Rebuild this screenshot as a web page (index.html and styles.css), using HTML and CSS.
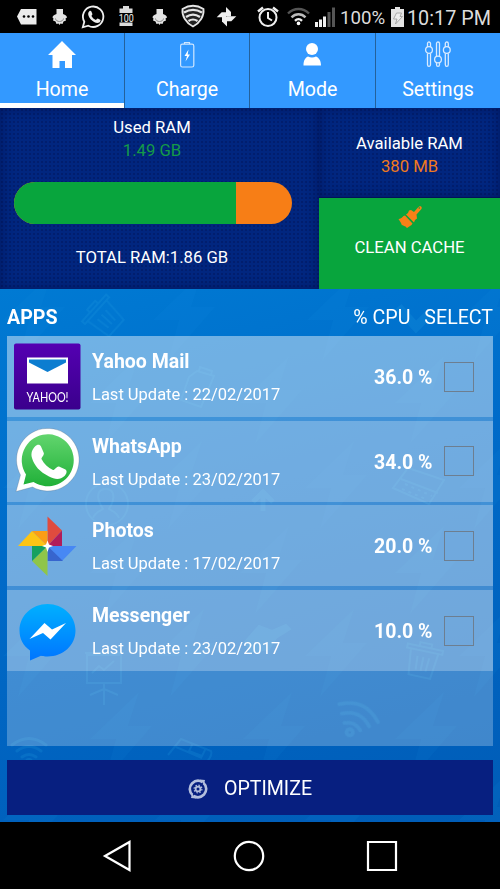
FILE: index.html
```
<!DOCTYPE html>
<html lang="en">
<head>
    <meta charset="UTF-8">
    <meta name="viewport" content="width=device-width, initial-scale=1.0">
    <title>Battery Optimizer</title>
    <link rel="stylesheet" href="styles.css">
</head>
<body>
    <div class="status-bar">
        <svg class="status-icons" width="336" height="33" viewBox="0 0 336 33">
            <!-- message -->
            <path d="M17 16.5L21 9h15.500v15.500H21z" fill="#ececec"/>
            <g fill="#000"><circle cx="24" cy="16.500" r="1.300"/><circle cx="28.500" cy="16.500" r="1.300"/><circle cx="33" cy="16.500" r="1.300"/></g>
            <!-- bulbs -->
            <g id="bulb">
                <path d="M56.500 9h6.500v5c2.500.8 4 2 4 3.500l-1.500 1 .5 2-2.500 1-1 2.500-2-.5-1 1.500-1-1.500-2 .5-1-2.500-2.500-1 .5-2-1-1c0-1.500 1.500-2.700 4-3.500z" fill="#e4e4e4"/>
                <path d="M55.500 18.500c.5 4 7.500 4 8 0" fill="none" stroke="#888" stroke-width="1"/>
            </g>
            <use href="#bulb" x="100"/>
            <!-- whatsapp -->
            <path d="M82.800 27.300l1.500-5.500a10.200 10.200 0 1 1 4 3.900z" fill="none" stroke="#eee" stroke-width="1.800"/>
            <path d="M89.300 11.300c.8-.8 1.800-.5 2.100.2l1 2.400c.2.600-.9 1.600-.9 2 1 2 2.500 3.300 4.400 4 .5 0 1.300-1.500 1.900-1.300l2.500 1.200c.9.500-.3 2.600-1.500 3-4.500 1.300-11.800-5.500-10.500-10z" fill="#eee"/>
            <!-- battery 100 -->
            <path d="M123 6h6v2.500h3.500V26h-13V8.500h3.500z" fill="#dcdcdc"/>
            <path d="M117.500 13h17v9.500h-17z" fill="#000"/>
            <text x="126.200" y="22" text-anchor="middle" textLength="15" lengthAdjust="spacingAndGlyphs" class="badge-text">100</text>
            <!-- shield -->
            <path d="M182.500 9c7-4.300 14-4.300 21 0 .8 7-3.500 14-10.500 17.500-7-3.500-11.300-10.500-10.500-17.500z" fill="#222" stroke="#e6e6e6" stroke-width="1.800"/>
            <g fill="none" stroke="#e6e6e6" stroke-width="2.200"><path d="M184 12.500c6-3.500 12-3.500 18 0"/><path d="M186 17c4.500-3 9.500-3 14 0"/><path d="M188.500 21c3-2 6-2 9 0"/></g>
            <!-- pinwheel -->
            <g fill="#eee"><path id="wing" d="M226 16.500V7l5 5v4.500z"/><use href="#wing" transform="rotate(90 226.500 16.800)"/><use href="#wing" transform="rotate(180 226.500 16.800)"/><use href="#wing" transform="rotate(270 226.500 16.800)"/></g>
            <!-- alarm -->
            <g fill="none" stroke="#f0f0f0" stroke-width="2"><circle cx="268" cy="17.500" r="8.500"/><path d="M268 12v6l4 2.500"/><path d="M258 11.500l5-4M278 11.500l-5-4" stroke-width="2.400"/></g>
            <!-- wifi -->
            <g fill="none" stroke-width="2.400"><path d="M288 13.500c6-6 15-6 21 0" stroke="#555"/><path d="M291.500 17.300c4-4 10-4 14 0" stroke="#bbb"/><path d="M295 20.800c2-2 5-2 7 0" stroke="#eee"/></g>
            <circle cx="298.500" cy="23.400" r="1.800" fill="#fff"/>
            <!-- signal -->
            <path d="M315 22h3v5h-3zM319 19.500h3V27h-3zM323 16.500h3V27h-3z" fill="#f0f0f0"/>
            <path d="M327.500 12h3v15h-3zM332 7.500h3V27h-3z" fill="#555"/>
        </svg>
        <span class="status-text percent">100%</span>
        <svg class="status-battery" width="13" height="20" viewBox="0 0 13 20">
            <path d="M4 0h5v2h4v18H0V2h4z" fill="#e4e4e4"/>
            <path d="M5.500 6h5L9 9.500h2.500l-7 7.500 1.500-5H2.500z" fill="#eee" stroke="#999" stroke-width=".8"/>
        </svg>
        <span class="status-text clock">10:17 PM</span>
    </div>

    <div class="tabs">
        <div class="tab active">
            <svg width="28" height="28" viewBox="0 0 28 28"><path d="M14 0L28 14h-4v13h-7v-7h-5.500v7h-7V14H0z" fill="#fff"/></svg>
            <span>Home</span>
        </div>
        <div class="tab">
            <svg width="28" height="28" viewBox="0 0 28 28"><g fill="none" stroke="#cfe6ff" stroke-width="1.200"><rect x="7.600" y="3.200" width="13.200" height="22.800" rx="1.800"/><path d="M11.500 3V1.500h5V3"/></g><path d="M15.500 8.500l-4 6.500h2.500l-1.500 5.500 4.500-7h-2.300z" fill="#fff"/></svg>
            <span>Charge</span>
        </div>
        <div class="tab">
            <svg width="28" height="28" viewBox="0 0 28 28"><circle cx="13" cy="8" r="6" fill="#fff"/><path d="M4.500 24.500c0-5 1.500-7.500 4.500-9 2.500 1.200 5.500 1.200 8 0 3 1.500 5 4 5 9z" fill="#fff"/></svg>
            <span>Mode</span>
        </div>
        <div class="tab">
            <svg width="28" height="28" viewBox="0 0 28 28"><g fill="none" stroke="#d9ebff" stroke-width="1.300"><circle cx="5" cy="9" r="3.400"/><circle cx="14" cy="18.500" r="3.400"/><circle cx="22.800" cy="9" r="3.400"/><path d="M3.500 6V2.500c0-2 3-2 3 0V6M3.500 12.500v11c0 2.500 3 2.500 3 0v-11M12.500 15.500v-13c0-2 3-2 3 0v13M12.500 22v1.500c0 2.500 3 2.500 3 0V22M21.300 6V2.500c0-2 3-2 3 0V6M21.300 12.500v11c0 2.500 3 2.500 3 0v-11"/></g></svg>
            <span>Settings</span>
        </div>
    </div>

    <div class="ram">
        <div class="used">
            <div class="ram-label">Used RAM</div>
            <div class="ram-value green">1.49 GB</div>
            <div class="bar"><div class="bar-fill" style="width: 80%"></div></div>
            <div class="total">TOTAL RAM:1.86 GB</div>
        </div>
        <div class="side">
            <div class="available">
                <div class="ram-label">Available RAM</div>
                <div class="ram-value orange">380 MB</div>
            </div>
            <div class="clean">
                <svg width="24" height="24" viewBox="0 0 24 24" fill="#f88017"><path d="M.5 14c2 0 4-1.500 5-3l1.500-.5 7.500 8-1 1.500-4.500 3-1.500-1.500L6 21l-1.500-1-.5.500-1-2.500z"/><path d="M8 9.500l2-1.500 1-2.500 2-.5 3 2 4-4.500c2.500-3 5-.5 3 2L18.500 9.500l.5 4-2 1.500-1 2.500z"/><circle cx="21.300" cy="3" r=".8" fill="#08a53d"/></svg>
                <span>CLEAN CACHE</span>
            </div>
        </div>
    </div>

    <div class="apps">
        <svg class="doodles" width="500" height="533" viewBox="0 0 500 533">
            <defs>
                <path id="bolt" d="M14-38L-35 9h26L-20 50 27-4H3z"/>
                <g id="wifi" fill="none" stroke="#28a4e4" stroke-width="3" stroke-linecap="round"><path d="M-17-7q17-13 34 0M-12-1q12-9 24 0M-7 5q7-5 14 0"/><circle cy="10" r="2.500"/></g>
                <g id="bin" fill="none" stroke="#28a4e4" stroke-width="2"><path d="M-18-12h36v4h-36zM-6-12v-4H6v4M-14-8l3 26h22l3-26M-6-2l1 14M0-2v14M6-2L5 12"/></g>
            </defs>
            <g class="bolts">
                <use href="#bolt" x="38" y="22"/><use href="#bolt" x="188" y="22"/><use href="#bolt" x="342" y="22"/><use href="#bolt" x="494" y="22"/>
                <use href="#bolt" x="125" y="105"/><use href="#bolt" x="275" y="105"/><use href="#bolt" x="430" y="105"/>
                <use href="#bolt" x="38" y="190"/><use href="#bolt" x="188" y="190"/><use href="#bolt" x="340" y="190"/><use href="#bolt" x="494" y="190"/>
                <use href="#bolt" x="125" y="275"/><use href="#bolt" x="275" y="275"/><use href="#bolt" x="430" y="275"/>
                <use href="#bolt" x="38" y="358"/><use href="#bolt" x="190" y="358"/><use href="#bolt" x="340" y="358"/><use href="#bolt" x="494" y="358"/>
                <use href="#bolt" x="125" y="441"/><use href="#bolt" x="278" y="441"/><use href="#bolt" x="430" y="441"/>
                <use href="#bolt" x="38" y="522"/><use href="#bolt" x="190" y="522"/><use href="#bolt" x="340" y="522"/><use href="#bolt" x="494" y="522"/>
            </g>
            <g class="lines">
                <use href="#bin" transform="translate(103 27) rotate(-48)"/>
                <use href="#bin" transform="translate(423 370) rotate(12)"/>
                <path d="M189 88l8-6 17 5-13 31-20-7zM199 82l1-4 12 4-1 4"/>
                <circle cx="107" cy="215" r="21"/><path d="M93 229c2-6 7-7 10-9-9-14-4-20 3-20s11 7 3 20c3 2 8 3 10 9"/>
                <path d="M408 179l36 12-15 24-36-16zM401 190l37 14"/><path d="M405 195l27 12M402 200l26 11" stroke-dasharray="3 4"/>
                <path d="M87 366h34v28H87zM85 364h38M104 394v22M104 400l-14 6M104 400l14 6M92 384l7-7 5 4 10-9"/>
                <path d="M263 222v-20M253 213l10-10 10 10" stroke-width="5"/>
                <path d="M168 466l13-16 30 12c2 4-2 8-5 12M176 458l26 11M193 454l-4 8 13 5 4-8"/>
                <path d="M398 18l18 20 14-14" stroke-width="9"/>
                <path d="M245 353l14-16 13 5 14-6 4 4-14 9-7 11-18 3z" fill="#28a4e4"/>
            </g>
            <use href="#wifi" class="lines" transform="translate(355 432) rotate(25) scale(1.250)"/>
            <use href="#wifi" class="lines" transform="translate(29 463)"/>
        </svg>
        <div class="apps-head">
            <b>APPS</b>
            <span class="cpu-head">% CPU</span>
            <span>SELECT</span>
        </div>
        <div class="list">
            <div class="app">
                <svg class="app-icon" width="80" height="80" viewBox="0 0 80 80">
                    <defs><linearGradient id="yg" x2="0" y2="1"><stop stop-color="#5400b2"/><stop offset="1" stop-color="#3a008c"/></linearGradient></defs>
                    <rect x="7" y="7.500" width="66.500" height="66" rx="2" fill="url(#yg)"/>
                    <path d="M20 21.500h41v26H20z" fill="#fff"/><path d="M22 23.500h37v3L40.500 36 22 26.500z" fill="#0c7dd0"/>
                    <text x="40.500" y="65.500" text-anchor="middle" textLength="42" lengthAdjust="spacingAndGlyphs" class="yahoo">YAHOO!</text>
                </svg>
                <div class="info">
                    <div class="name">Yahoo Mail</div>
                    <div class="date">Last Update : 22/02/2017</div>
                </div>
                <div class="cpu">36.0 %</div>
                <div class="check"></div>
            </div>
            <div class="app">
                <svg class="app-icon" width="80" height="80" viewBox="0 0 80 80">
                    <defs><linearGradient id="wg" x2="0" y2="1"><stop stop-color="#62d56e"/><stop offset="1" stop-color="#20b038"/></linearGradient></defs>
                    <path d="M9 71.500l4.500-16.500a31.300 31.300 0 1 1 12 12z" fill="#fff" stroke="#456" stroke-opacity=".25" stroke-width="1"/>
                    <path d="M16.500 64.500l2.500-10a26 26 0 1 1 7.500 7.500z" fill="url(#wg)"/>
                    <path d="M28 26.500c2-2.500 5-2.500 6 0l2.800 6.500c.7 2-2.600 4.500-2.300 6 2.500 5 6.500 8.500 11.500 11 1.500.3 4-4.300 6-3.500l6.500 3c2 1.500 1 4.500-1 6.500-4.500 4-9.500 3.500-15.500.5C32.500 51.500 27.500 46 25 38c-1.500-5 .5-9 3-11.500z" fill="#fff"/>
                </svg>
                <div class="info">
                    <div class="name">WhatsApp</div>
                    <div class="date">Last Update : 23/02/2017</div>
                </div>
                <div class="cpu">34.0 %</div>
                <div class="check"></div>
            </div>
            <div class="app">
                <svg class="app-icon" width="80" height="80" viewBox="0 0 80 80">
                    <path d="M40.500 11.500L55 25.500 40.500 41z" fill="#df4b3e"/><path d="M55 25.500V41H40.500z" fill="#b01c5a"/>
                    <path d="M40.500 41h29L55 56z" fill="#4788f4"/><path d="M40.500 41L56 56H40.500z" fill="#3765ce"/>
                    <path d="M40.500 41v30L25 56z" fill="#8fc549"/><path d="M40.500 41L25 56V41z" fill="#15a060"/>
                    <path d="M40.500 41H11l14-15z" fill="#fdc415"/><path d="M25 26h15.500v15z" fill="#fb9d16"/>
                    <path d="M40.500 35.500l1.500 4 4 1.500-4 1.500-1.500 4.500-1.500-4.500-4-1.500 4-1.500z" fill="#fff"/>
                </svg>
                <div class="info">
                    <div class="name">Photos</div>
                    <div class="date">Last Update : 17/02/2017</div>
                </div>
                <div class="cpu">20.0 %</div>
                <div class="check"></div>
            </div>
            <div class="app">
                <svg class="app-icon" width="80" height="80" viewBox="0 0 80 80">
                    <defs><linearGradient id="mg" x2="0" y2="1"><stop stop-color="#00b0ff"/><stop offset="1" stop-color="#0075ff"/></linearGradient></defs>
                    <path d="M40.500 14C56 14 68.500 25.500 68.500 40.500S56 66.500 40.500 66.500c-2.500 0-4.500-.2-6.500-.8L23 70.500V60.500C16 55.500 12.500 49 12.500 40.500 12.500 25.500 25 14 40.500 14z" fill="url(#mg)"/>
                    <path d="M22.500 49L37.500 33l7.500 6.500L59 33 43.500 49.500 36 43z" fill="#fff"/>
                </svg>
                <div class="info">
                    <div class="name">Messenger</div>
                    <div class="date">Last Update : 23/02/2017</div>
                </div>
                <div class="cpu">10.0 %</div>
                <div class="check"></div>
            </div>
        </div>
        <div class="optimize">
            <svg width="20" height="20" viewBox="0 0 20 20" fill="none" stroke="#b3bedd"><path d="M4.500 16A8 8 0 0 1 4 4.500C7 1.500 11 1 14.500 3M15.500 4A8 8 0 0 1 16 15.500C13 18.500 9 19 5.500 17" stroke-width="2.600"/><path d="M12 .5l5 .5-1 4.500zM8 19.500L3 19l1-4.500z" fill="#b3bedd" stroke="none"/><circle cx="10" cy="10" r="2.400" stroke-width="1.800"/><circle cx="10" cy="10" r="3.900" stroke-width="1.200" stroke-dasharray="1.500 1.560"/></svg>
            <span>OPTIMIZE</span>
        </div>
    </div>

    <div class="nav-bar">
        <svg width="32" height="32" viewBox="0 0 32 32"><path d="M4 16L28.500 2v28z"/></svg>
        <svg width="32" height="32" viewBox="0 0 32 32"><circle cx="16" cy="16" r="14.200"/></svg>
        <svg width="32" height="32" viewBox="0 0 32 32"><path d="M2 2h28v28H2z"/></svg>
    </div>
</body>
</html>
```
FILE: styles.css
```
* {
    box-sizing: border-box;
}
body {
    font-family: Roboto, "Liberation Sans", sans-serif;
    margin: 0;
    width: 500px;
    height: 889px;
    overflow: hidden;
    display: flex;
    flex-direction: column;
    background-color: black;
    color: white;
}
svg {
    display: block;
    flex-shrink: 0;
}
.status-bar {
    height: 33px;
    display: flex;
    align-items: center;
    background-color: black;
}
.status-text {
    color: #dcdcdc;
    line-height: 33px;
    padding-top: 3px;
    white-space: nowrap;
}
.percent {
    width: 55px;
    padding-left: 4px;
    font-size: 18.7px;
}
.clock {
    padding-left: 3px;
    font-size: 19.8px;
}
.badge-text {
    font-size: 11px;
    fill: #eee;
}
.tabs {
    height: 75px;
    display: grid;
    grid-template-columns: 124px 124px 125px 124px;
    gap: 1px;
    background-color: #24619b;
}
.tab {
    display: flex;
    flex-direction: column;
    align-items: center;
    padding-top: 8px;
    background-color: #3399ff;
    font-size: 19.6px;
}
.tab span {
    line-height: 24px;
    margin-top: 9px;
}
.tab.active {
    border-bottom: 5px solid white;
}
.ram {
    height: 181px;
    display: flex;
    background-color: #01247d;
    font-size: 16.7px;
    text-align: center;
}
.used, .available {
    background-color: #01267f;
    background-image: radial-gradient(circle, rgba(0,10,70,0.3) 0.8px, transparent 1.1px);
    background-size: 4px 4px;
    box-shadow: inset 0 0 12px rgba(0,0,50,0.4);
}
.used {
    width: 319px;
    padding: 8px 14px 0;
}
.used .ram-label, .used .ram-value, .total {
    width: 276px;
}
.ram-label, .ram-value {
    line-height: 23px;
}
.green {
    color: #159a48;
}
.orange {
    color: #f07a20;
}
.bar {
    width: 278px;
    height: 42px;
    margin-top: 20px;
    border-radius: 21px;
    overflow: hidden;
    background-color: #f77e16;
}
.bar-fill {
    height: 42px;
    background-color: #08a53d;
}
.total {
    margin-top: 22px;
    line-height: 23px;
}
.side {
    width: 181px;
}
.available {
    height: 90px;
    padding-top: 24px;
    border-bottom: 1px solid #001259;
}
.clean {
    height: 91px;
    display: flex;
    flex-direction: column;
    align-items: center;
    padding-top: 7px;
    background-color: #08a53d;
}
.clean span {
    margin-top: 7px;
    line-height: 23px;
}
.apps {
    position: relative;
    height: 533px;
    padding: 0 7px;
    background: linear-gradient(165deg, #007ad3 0%, #006bc9 40%, #005cb7 100%);
}
.doodles {
    position: absolute;
    left: 0;
    top: 0;
}
.bolts {
    fill: #189be0;
    opacity: 0.09;
}
.lines {
    fill: none;
    stroke: #28a4e4;
    stroke-width: 2;
    opacity: 0.19;
}
.apps-head, .list, .optimize {
    position: relative;
}
.apps-head {
    height: 47px;
    display: flex;
    align-items: center;
    padding-top: 9px;
    font-size: 19.6px;
}
.cpu-head {
    margin-left: auto;
    margin-right: 14px;
}
.list {
    height: 410px;
    display: flex;
    flex-direction: column;
    gap: 3.7px;
    background-color: rgba(255,255,255,0.25);
}
.app {
    height: 81px;
    display: flex;
    align-items: center;
    background-color: rgba(255,255,255,0.25);
}
.app-icon {
    margin-bottom: 2px;
}
.info {
    flex: 1;
    padding: 2px 0 0 5px;
}
.name {
    font-size: 19.5px;
    font-weight: 700;
    line-height: 24px;
}
.date {
    font-size: 16.5px;
    line-height: 21px;
    margin-top: 10px;
}
.cpu {
    width: 59px;
    padding-top: 2px;
    font-size: 19.5px;
    font-weight: 700;
    white-space: nowrap;
}
.check {
    width: 30px;
    height: 30px;
    margin: 0 19px 0 11px;
    border: 1px solid #6d7e90;
}
.optimize {
    height: 55px;
    margin-top: 14px;
    padding-top: 2px;
    display: flex;
    align-items: center;
    justify-content: center;
    gap: 16px;
    background-color: #071f80;
    font-size: 19.6px;
}
.nav-bar {
    height: 67px;
    display: flex;
    justify-content: center;
    align-items: center;
    gap: 100.5px;
    padding-right: 2px;
    background-color: black;
}
.nav-bar svg {
    fill: none;
    stroke: white;
    stroke-width: 2.2;
}
.yahoo {
    fill: white;
    font-family: Lato, sans-serif;
    font-size: 13.5px;
}
```
